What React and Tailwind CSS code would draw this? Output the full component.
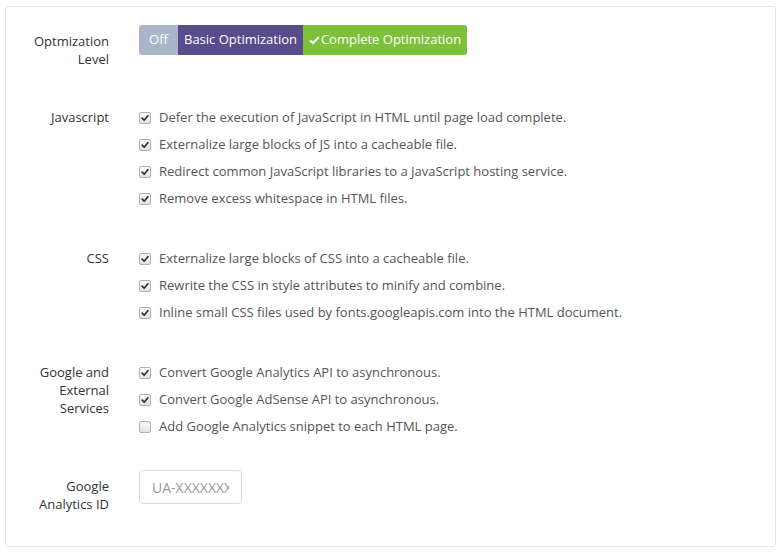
import React from "react";

const sections = [
  {
    label: ["Javascript"],
    items: [
      ["Defer the execution of JavaScript in HTML until page load complete.", true],
      ["Externalize large blocks of JS into a cacheable file.", true],
      ["Redirect common JavaScript libraries to a JavaScript hosting service.", true],
      ["Remove excess whitespace in HTML files.", true],
    ],
  },
  {
    label: ["CSS"],
    items: [
      ["Externalize large blocks of CSS into a cacheable file.", true],
      ["Rewrite the CSS in style attributes to minify and combine.", true],
      ["Inline small CSS files used by fonts.googleapis.com into the HTML document.", true],
    ],
  },
  {
    label: ["Google and", "External", "Services"],
    items: [
      ["Convert Google Analytics API to asynchronous.", true],
      ["Convert Google AdSense API to asynchronous.", true],
      ["Add Google Analytics snippet to each HTML page.", false],
    ],
  },
];

function Check({ checked }) {
  return (
    <span className="w-[12px] h-[12px] rounded-[2px] border border-[#b0b0b0] bg-gradient-to-b from-[#fdfdfd] to-[#e2e2e2] flex items-center justify-center shrink-0">
      {checked && (
        <svg width="8" height="8" viewBox="0 0 10 10">
          <path d="M1.5 5.2 L4 7.8 L8.6 2.2" fill="none" stroke="#333" strokeWidth="2.2" strokeLinecap="round" strokeLinejoin="round" />
        </svg>
      )}
    </span>
  );
}

export default function App() {
  return (
    <div className="min-h-screen bg-white pt-[6px] pl-[5px]" style={{ fontFamily: '"Open Sans", "Liberation Sans", sans-serif' }}>
      <div className="w-[771px] h-[541px] border border-[#e3e8ee] rounded-[3px] bg-white pt-[18px]">
        {/* optimization level */}
        <div className="flex">
          <div className="w-[103px] text-right text-[13px] leading-[18px] text-[#333] pt-[7px]">
            <div>Optmization</div>
            <div>Level</div>
          </div>
          <div className="ml-[30px] flex h-[30px] rounded-[3px] overflow-hidden text-[13px] text-white">
            <div className="w-[39px] bg-[#abb5c9] flex items-center justify-center">Off</div>
            <div className="w-[125px] bg-[#594c8b] flex items-center justify-center">Basic Optimization</div>
            <div className="w-[164px] bg-[#7cc139] flex items-center justify-center gap-[1px]">
              <svg width="11" height="10" viewBox="0 0 12 10">
                <path d="M1.2 5.4 L4.4 8.4 L10.8 1.6" fill="none" stroke="#fff" strokeWidth="2.4" strokeLinejoin="round" />
              </svg>
              Complete Optimization
            </div>
          </div>
        </div>

        {sections.map((s, i) => (
          <div key={i} className={`flex ${i === 0 ? "mt-[36px]" : "mt-[33px]"}`}>
            <div className="w-[103px] text-right text-[13px] leading-[18px] text-[#333] pt-[4px]">
              {s.label.map((l) => (
                <div key={l}>{l}</div>
              ))}
            </div>
            <div className="ml-[30px] flex flex-col">
              {s.items.map(([t, c]) => (
                <div key={t} className="h-[27px] flex items-center gap-[8px] text-[13px] text-[#555]">
                  <Check checked={c} />
                  <span>{t}</span>
                </div>
              ))}
            </div>
          </div>
        ))}

        {/* analytics id */}
        <div className="flex mt-[30px]">
          <div className="w-[103px] text-right text-[13px] leading-[18px] text-[#333] pt-[7px]">
            <div>Google</div>
            <div>Analytics ID</div>
          </div>
          <input
            placeholder="UA-XXXXXXX-X"
            className="ml-[30px] w-[103px] h-[34px] border border-[#d9dde3] rounded-[4px] px-[12px] text-[14px] text-[#555] placeholder:text-[#999] outline-none"
          />
        </div>
      </div>
    </div>
  );
}
